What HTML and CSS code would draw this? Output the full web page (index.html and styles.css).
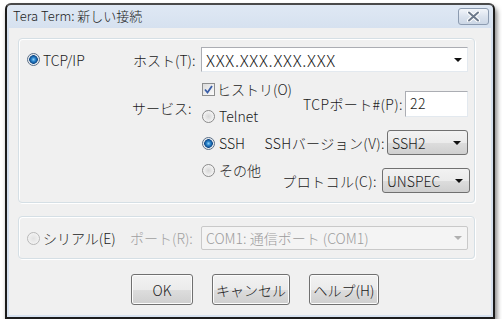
FILE: index.html
```html
<!DOCTYPE html>
<html lang="ja">
<head>
  <meta charset="UTF-8" />
  <title>Tera Term: 新しい接続</title>
  <link rel="stylesheet" href="styles.css">
</head>
<body>

  <div class="window">
    <!-- Title bar -->
    <div class="titlebar">
      <span class="title">Tera Term: 新しい接続</span>
      <button class="close-btn" aria-label="close">
        <svg width="13" height="11" viewBox="0 0 13 11">
          <path d="M2 1.5 L11 9.5 M11 1.5 L2 9.5" stroke="#ffffff" stroke-width="4" stroke-linecap="round"/>
          <path d="M2 1.5 L11 9.5 M11 1.5 L2 9.5" stroke="#6d7a8c" stroke-width="2" stroke-linecap="round"/>
        </svg>
      </button>
    </div>

    <div class="client">
      <!-- TCP/IP group -->
      <div class="group group-tcp">
        <div class="host-row">
          <label class="radio radio-main"><span class="radio-dot checked"></span>TCP/IP</label>
          <span class="host-label">ホスト(T):</span>
          <div class="combo host-combo">
            <span class="combo-text">XXX.XXX.XXX.XXX</span>
            <span class="arrow"></span>
          </div>
        </div>

        <div class="service-area">
          <span class="service-label">サービス:</span>
          <div class="service-col">
            <label class="check"><span class="checkbox">
              <svg width="11" height="11" viewBox="0 0 11 11">
                <path d="M2 5.5 L4.5 8.5 L9 2" fill="none" stroke="#3a5ea8" stroke-width="1.8"/>
              </svg>
            </span>ヒストリ(O)</label>
            <label class="radio"><span class="radio-dot"></span>Telnet</label>
            <label class="radio"><span class="radio-dot checked"></span>SSH</label>
            <label class="radio"><span class="radio-dot"></span>その他</label>
          </div>
          <div class="option-col">
            <div class="opt-row">
              <span>TCPポート#(P):</span>
              <div class="textbox">22</div>
            </div>
            <div class="opt-row">
              <span>SSHバージョン(V):</span>
              <div class="droplist droplist-ver">SSH2<span class="arrow"></span></div>
            </div>
            <div class="opt-row opt-proto">
              <span>プロトコル(C):</span>
              <div class="droplist droplist-proto">UNSPEC<span class="arrow"></span></div>
            </div>
          </div>
        </div>
      </div>

      <!-- Serial group -->
      <div class="group group-serial">
        <label class="radio radio-serial"><span class="radio-dot disabled"></span>シリアル(E)</label>
        <span class="port-label">ポート(R):</span>
        <div class="combo combo-disabled">
          <span class="combo-text">COM1: 通信ポート (COM1)</span>
          <span class="arrow"></span>
        </div>
      </div>

      <!-- Buttons -->
      <div class="buttons">
        <button class="btn btn-ok">OK</button>
        <button class="btn btn-cancel">キャンセル</button>
        <button class="btn btn-help">ヘルプ(H)</button>
      </div>
    </div>
  </div>

</body>
</html>
```

FILE: styles.css
```css
* {
  box-sizing: border-box;
  margin: 0;
  padding: 0;
}

body {
  background: #ffffff;
  font-family: "Noto Sans CJK JP", "Noto Sans", sans-serif;
  font-weight: 300;
  font-size: 14px;
  color: #1a1a1a;
  padding: 3px 0 0 5px;
}

.window {
  width: 490px;
  height: 316px;
  border: 2px solid #1c1c1c;
  border-top-color: #4a4a4a;
  border-radius: 6px 6px 0 0;
  background: linear-gradient(to bottom, #dfe8f4, #d3dfee 30px, #d6e1ef);
  padding: 0 2px 2px;
  box-shadow: 2px 4px 5px rgba(0, 0, 0, 0.5);
  display: flex;
  flex-direction: column;
}

/* title bar */
.titlebar {
  height: 23px;
  display: flex;
  align-items: flex-start;
  justify-content: space-between;
}

.title {
  font-size: 13px;
  line-height: 22px;
  color: #222;
  padding-left: 4px;
}

.close-btn {
  width: 31px;
  height: 17px;
  margin-top: 3px;
  margin-right: 2px;
  border: 1px solid #8c9bb0;
  border-radius: 3px;
  background: linear-gradient(to bottom, #f2f5fa, #dbe3ee 50%, #ccd7e6);
  display: flex;
  align-items: center;
  justify-content: center;
}

/* client area */
.client {
  flex: 1;
  background: #f0f0f0;
  padding: 10px 0 0 9px;
}

.group {
  width: 457px;
  border: 1px solid #d5dfe5;
  border-radius: 4px;
  box-shadow: inset 1px 1px 0 #ffffff, 1px 1px 0 #ffffff;
}

.group-tcp {
  padding: 8px 0 9px 8px;
}

.host-row {
  display: flex;
  align-items: center;
  height: 25px;
}

.radio {
  display: flex;
  align-items: center;
  gap: 4px;
  white-space: nowrap;
  height: 20px;
}

.radio-main {
  width: 106px;
  gap: 3px;
}

.radio-dot {
  width: 13px;
  height: 13px;
  border-radius: 50%;
  border: 1px solid #8a8a8a;
  background: radial-gradient(circle, #d6d6d6 0, #ececec 4px, #f8f8f8 6px);
  flex-shrink: 0;
}

.radio-dot.checked {
  border-color: #5a6e86;
  background: radial-gradient(circle, #8fd0f6 0, #2a84cc 2px, #0e4a8a 4px, #e4e8ec 4.6px, #f6f6f6 6px);
}

.radio-dot.disabled {
  border-color: #b8b8b8;
  background: radial-gradient(circle, #e2e2e2 0, #ededed 4px, #f6f6f6 6px);
}

.host-label {
  width: 68px;
  white-space: nowrap;
}

.combo {
  display: flex;
  align-items: center;
  justify-content: space-between;
  background: #ffffff;
  border: 1px solid #abadb3;
  border-color: #abadb3 #e3e9ef #e3e9ef #abadb3;
  padding: 0 5px 0 4px;
}

.host-combo {
  width: 267px;
  height: 25px;
  font-size: 16.5px;
  letter-spacing: 0.7px;
}

.arrow {
  width: 0;
  height: 0;
  border-left: 4px solid transparent;
  border-right: 4px solid transparent;
  border-top: 4px solid #111;
}

/* service area */
.service-area {
  display: flex;
  margin-top: 7px;
  margin-left: 105px;
}

.service-label {
  width: 70px;
  margin-top: 19px;
  height: 20px;
  line-height: 20px;
  white-space: nowrap;
}

.service-col {
  width: 57px;
  display: flex;
  flex-direction: column;
  gap: 7px;
}

.check {
  display: flex;
  align-items: center;
  gap: 2px;
  height: 20px;
  white-space: nowrap;
}

.checkbox {
  width: 13px;
  height: 13px;
  border: 1px solid #8e8f8f;
  background: linear-gradient(135deg, #dcdcdc, #fbfbfb);
  display: flex;
  align-items: center;
  justify-content: center;
  flex-shrink: 0;
}

.option-col {
  width: 209px;
  margin-top: 12px;
  display: flex;
  flex-direction: column;
  align-items: flex-end;
  gap: 13px;
}

.opt-row {
  display: flex;
  align-items: center;
  gap: 2px;
  white-space: nowrap;
  letter-spacing: 0.4px;
}

.opt-proto {
  gap: 5px;
  margin-right: -2px;
}

.textbox {
  width: 63px;
  height: 26px;
  background: #fff;
  border: 1px solid #abadb3;
  border-color: #abadb3 #e3e9ef #e3e9ef #abadb3;
  padding-left: 4px;
  line-height: 22px;
}

.droplist {
  height: 25px;
  display: flex;
  align-items: center;
  justify-content: space-between;
  padding: 0 6px 0 4px;
  border: 1px solid #707070;
  border-radius: 3px;
  background: linear-gradient(to bottom, #f2f2f2, #ebebeb 50%, #dddddd 51%, #cfcfcf);
  letter-spacing: 0;
}

.droplist-ver {
  width: 81px;
}

.droplist-proto {
  width: 88px;
}

/* serial group */
.group-serial {
  margin-top: 13px;
  padding: 9px 0 8px 8px;
  display: flex;
  align-items: center;
}

.radio-serial {
  width: 103px;
  gap: 3px;
}

.port-label {
  width: 71px;
  color: #a0a0a0;
  white-space: nowrap;
}

.combo-disabled {
  width: 267px;
  height: 24px;
  background: #f4f4f4;
  border: 1px solid #c9c9c9;
  border-radius: 2px;
  color: #9c9c9c;
}

.combo-disabled .arrow {
  border-top-color: #b0b0b0;
}

/* buttons */
.buttons {
  margin-top: 15px;
  display: flex;
  gap: 19px;
  padding-left: 113px;
}

.btn {
  height: 31px;
  font-family: inherit;
  font-weight: 300;
  font-size: 14px;
  color: #1a1a1a;
  border: 1px solid #707070;
  border-radius: 3px;
  background: linear-gradient(to bottom, #f2f2f2, #ebebeb 50%, #dddddd 51%, #cfcfcf);
  box-shadow: inset 0 0 0 1px #fcfcfc;
}

.btn-ok {
  width: 62px;
}

.btn-cancel {
  width: 78px;
}

.btn-help {
  width: 70px;
}
```
